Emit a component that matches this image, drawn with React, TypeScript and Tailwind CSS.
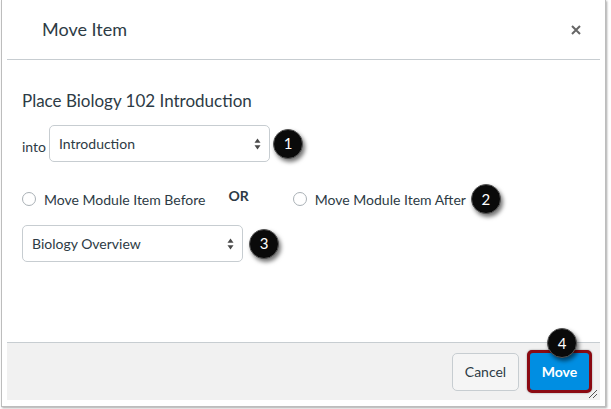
import React from 'react'

const Badge = ({ n, className = '' }: { n: number; className?: string }) => (
  <div
    className={`flex h-[30px] w-[30px] items-center justify-center rounded-full border border-[#555] bg-[#0a0a0a] text-[15px] text-white shadow-[2px_3px_4px_rgba(0,0,0,0.55)] ${className}`}
  >
    {n}
  </div>
)

const Select = ({ label, width }: { label: string; width: string }) => (
  <div
    className={`flex h-[37px] ${width} items-center justify-between rounded-[5px] border border-[#c7cdd1] bg-white pl-[9px] pr-[8px] text-[14px] text-[#2d3b45]`}
  >
    <span>{label}</span>
    <svg width="7" height="12" viewBox="0 0 7 12">
      <path d="M3.5 0.5 L6.5 4.8 H0.5 Z" fill="#4a4a4a" />
      <path d="M3.5 11.5 L6.5 7.2 H0.5 Z" fill="#4a4a4a" />
    </svg>
  </div>
)

const Radio = ({ label }: { label: string }) => (
  <label className="flex items-center gap-[8px] text-[14px] text-[#2d3b45]">
    <span className="h-[14px] w-[14px] rounded-full border border-[#aab1b6] bg-white" />
    {label}
  </label>
)

export default function App() {
  return (
    <div className="h-[409px] w-[611px] bg-white font-['Lato','Open_Sans',sans-serif]">
      <div className="ml-[1px] flex h-[407px] w-[605px] flex-col border border-t-0 border-[#bdbdbd] bg-white px-[5px] pb-[6px] shadow-[1px_1px_2px_rgba(0,0,0,0.35)]">
        <div className="flex h-[60px] items-center justify-between border-b border-[#c7cdd1] pl-[35px] pr-[19px]">
          <span className="text-[18px] text-[#2d3b45]">Move Item</span>
          <svg width="10" height="10" viewBox="0 0 10 10">
            <path d="M1 1 L9 9 M9 1 L1 9" stroke="#666" strokeWidth="2" />
          </svg>
        </div>
        <div className="flex flex-1 flex-col px-[15px] pt-[30px]">
          <div className="text-[17px] leading-[22px] text-[#2d3b45]">Place Biology 102 Introduction</div>
          <div className="mt-[13px] flex items-center">
            <span className="mr-[3px] mt-[6px] text-[14px] text-[#2d3b45]">into</span>
            <Select label="Introduction" width="w-[221px]" />
            <Badge n={1} className="ml-[3px]" />
          </div>
          <div className="mt-[22px] flex items-center">
            <Radio label="Move Module Item Before" />
            <span className="ml-[23px] mt-[-8px] text-[14px] font-bold text-[#2d3b45]">OR</span>
            <div className="ml-[44px]">
              <Radio label="Move Module Item After" />
            </div>
            <Badge n={2} className="ml-[5px]" />
          </div>
          <div className="mt-[11px] flex items-center">
            <Select label="Biology Overview" width="w-[221px]" />
            <Badge n={3} className="ml-[6px]" />
          </div>
        </div>
        <div className="relative flex h-[58px] items-center justify-end gap-[8px] border-t border-[#c7cdd1] bg-[#f1f1f1] pr-[8px]">
          <button className="flex h-[38px] w-[67px] items-center justify-center rounded-[5px] border border-[#c7cdd1] bg-[#f5f5f5] text-[14px] text-[#2d3b45]">
            Cancel
          </button>
          <div className="relative rounded-[5px] border-[3px] border-[#8b0a12] bg-[#8b0a12] shadow-[0_0_2px_rgba(0,0,0,0.4)]">
            <button className="flex h-[37px] w-[59px] items-center justify-center rounded-[3px] bg-[#008ee2] text-[14px] font-bold text-white">
              Move
            </button>
            <Badge n={4} className="absolute left-[17px] top-[-25px]" />
          </div>
          <svg className="absolute bottom-[1px] right-[2px]" width="10" height="10" viewBox="0 0 10 10">
            <path d="M1 9 L9 1 M5 9 L9 5" stroke="#555" strokeWidth="1" />
          </svg>
        </div>
      </div>
    </div>
  )
}
